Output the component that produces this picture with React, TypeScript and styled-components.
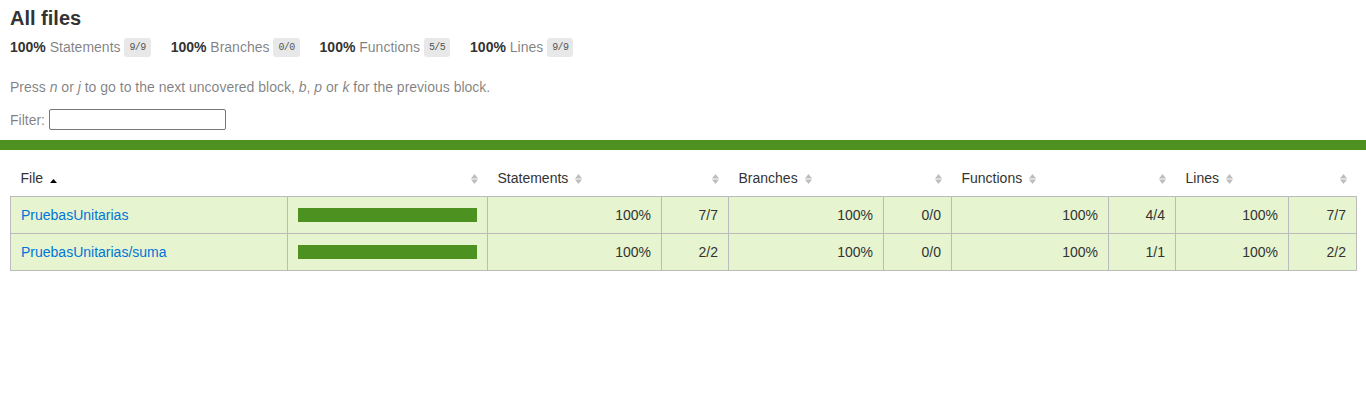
import React from "react";
import styled, { createGlobalStyle } from "styled-components";

const Global = createGlobalStyle`
  *, *::before, *::after { box-sizing: border-box; }
  html, body { margin: 0; padding: 0; background: #fff; }
  body {
    font-family: "Liberation Sans", Arial, Helvetica, sans-serif;
    font-size: 14px;
    color: #333;
  }
`;

const Pad = styled.div`
  padding: 10px;
`;

const Title = styled.h1`
  font-size: 20px;
  font-weight: bold;
  line-height: 17px;
  margin: 0;
`;

const SummaryRow = styled.div`
  display: flex;
  padding: 12px 0 9px;
  line-height: 16px;
`;

const SummaryItem = styled.div`
  padding-right: 20px;
`;

const Strong = styled.span`
  font-weight: bold;
`;

const Quiet = styled.span`
  color: rgba(0, 0, 0, 0.5);
`;

const Fraction = styled.span`
  font-family: "Liberation Mono", Consolas, monospace;
  font-size: 10px;
  letter-spacing: -0.6px;
  color: #555;
  background: #e8e8e8;
  padding: 4px 5px;
  border-radius: 3px;
  vertical-align: middle;
`;

const Hint = styled.p`
  color: rgba(0, 0, 0, 0.5);
  margin: 14px 0;
`;

const FilterRow = styled.div`
  color: rgba(0, 0, 0, 0.5);
  display: flex;
  align-items: center;
  gap: 4px;
`;

const SearchInput = styled.input`
  width: 177px;
  height: 21px;
  border: 1px solid #767676;
  border-radius: 2px;
  padding: 1px 2px;
  font-size: 13px;
  background: #fff;
`;

const StatusLine = styled.div`
  height: 10px;
  background: rgb(77, 146, 33);
`;

const Table = styled.table`
  border-collapse: collapse;
  width: 100%;
  table-layout: fixed;
`;

const Head = styled.th<{ $align?: "left" | "right" }>`
  padding: 10px;
  font-weight: normal;
  white-space: nowrap;
  text-align: ${(p) => p.$align ?? "left"};
  line-height: 16px;
`;

const HeadRow = styled.tr`
  border-bottom: 1px solid #bbb;
`;

const Body = styled.tbody`
  border: 1px solid #bbb;
`;

const Row = styled.tr`
  border-bottom: 1px solid #bbb;
  background: rgb(230, 245, 208);
`;

const Cell = styled.td<{ $align?: "left" | "right" }>`
  padding: 10px;
  border-right: 1px solid #bbb;
  text-align: ${(p) => p.$align ?? "left"};
  white-space: nowrap;
  line-height: 16px;
  &:last-child { border-right: none; }
`;

const FileLink = styled.a`
  color: #0074d9;
  text-decoration: none;
`;

const Chart = styled.div`
  line-height: 0;
  border: 1px solid rgb(77, 146, 33);
`;

const CoverFill = styled.div`
  display: inline-block;
  height: 12px;
  background: rgb(77, 146, 33);
`;

const SorterIcon = styled.svg`
  display: inline-block;
  width: 7px;
  height: 10px;
  margin-left: 0.5em;
  vertical-align: -1px;
`;

const Sorter = ({ sorted }: { sorted?: boolean }) =>
  sorted ? (
    <SorterIcon viewBox="0 0 7 10">
      <polygon points="0,9 3.5,5 7,9" fill="#000" />
    </SorterIcon>
  ) : (
    <SorterIcon viewBox="0 0 7 10">
      <polygon points="0,4.5 3.5,0 7,4.5" fill="#bdbdbd" />
      <polygon points="0,5.5 3.5,10 7,5.5" fill="#bdbdbd" />
    </SorterIcon>
  );

const summary = [
  { label: "Statements", frac: "9/9" },
  { label: "Branches", frac: "0/0" },
  { label: "Functions", frac: "5/5" },
  { label: "Lines", frac: "9/9" },
];

const colWidths = [277, 200, 174, 67, 155, 68, 157, 67, 113, 68];

const rows = [
  { file: "PruebasUnitarias", s: "7/7", b: "0/0", f: "4/4", l: "7/7" },
  { file: "PruebasUnitarias/suma", s: "2/2", b: "0/0", f: "1/1", l: "2/2" },
];

const metrics = ["Statements", "Branches", "Functions", "Lines"];

export default function App() {
  return (
    <>
      <Global />
      <Pad>
        <Title>All files</Title>
        <SummaryRow>
          {summary.map((s) => (
            <SummaryItem key={s.label}>
              <Strong>100% </Strong>
              <Quiet>{s.label}</Quiet> <Fraction>{s.frac}</Fraction>
            </SummaryItem>
          ))}
        </SummaryRow>
        <Hint>
          Press <em>n</em> or <em>j</em> to go to the next uncovered block, <em>b</em>, <em>p</em> or <em>k</em> for the previous block.
        </Hint>
        <FilterRow>
          Filter: <SearchInput type="search" />
        </FilterRow>
      </Pad>
      <StatusLine />
      <Pad>
        <Table>
          <colgroup>
            {colWidths.map((w, i) => (
              <col key={i} style={{ width: w }} />
            ))}
          </colgroup>
          <thead>
            <HeadRow>
              <Head>
                File
                <Sorter sorted />
              </Head>
              <Head $align="right">
                <Sorter />
              </Head>
              {metrics.map((m) => (
                <React.Fragment key={m}>
                  <Head>
                    {m}
                    <Sorter />
                  </Head>
                  <Head $align="right">
                    <Sorter />
                  </Head>
                </React.Fragment>
              ))}
            </HeadRow>
          </thead>
          <Body>
            {rows.map((r) => (
              <Row key={r.file}>
                <Cell>
                  <FileLink href="#">{r.file}</FileLink>
                </Cell>
                <Cell>
                  <Chart>
                    <CoverFill style={{ width: "100%" }} />
                  </Chart>
                </Cell>
                <Cell $align="right">100%</Cell>
                <Cell $align="right">{r.s}</Cell>
                <Cell $align="right">100%</Cell>
                <Cell $align="right">{r.b}</Cell>
                <Cell $align="right">100%</Cell>
                <Cell $align="right">{r.f}</Cell>
                <Cell $align="right">100%</Cell>
                <Cell $align="right">{r.l}</Cell>
              </Row>
            ))}
          </Body>
        </Table>
      </Pad>
    </>
  );
}
